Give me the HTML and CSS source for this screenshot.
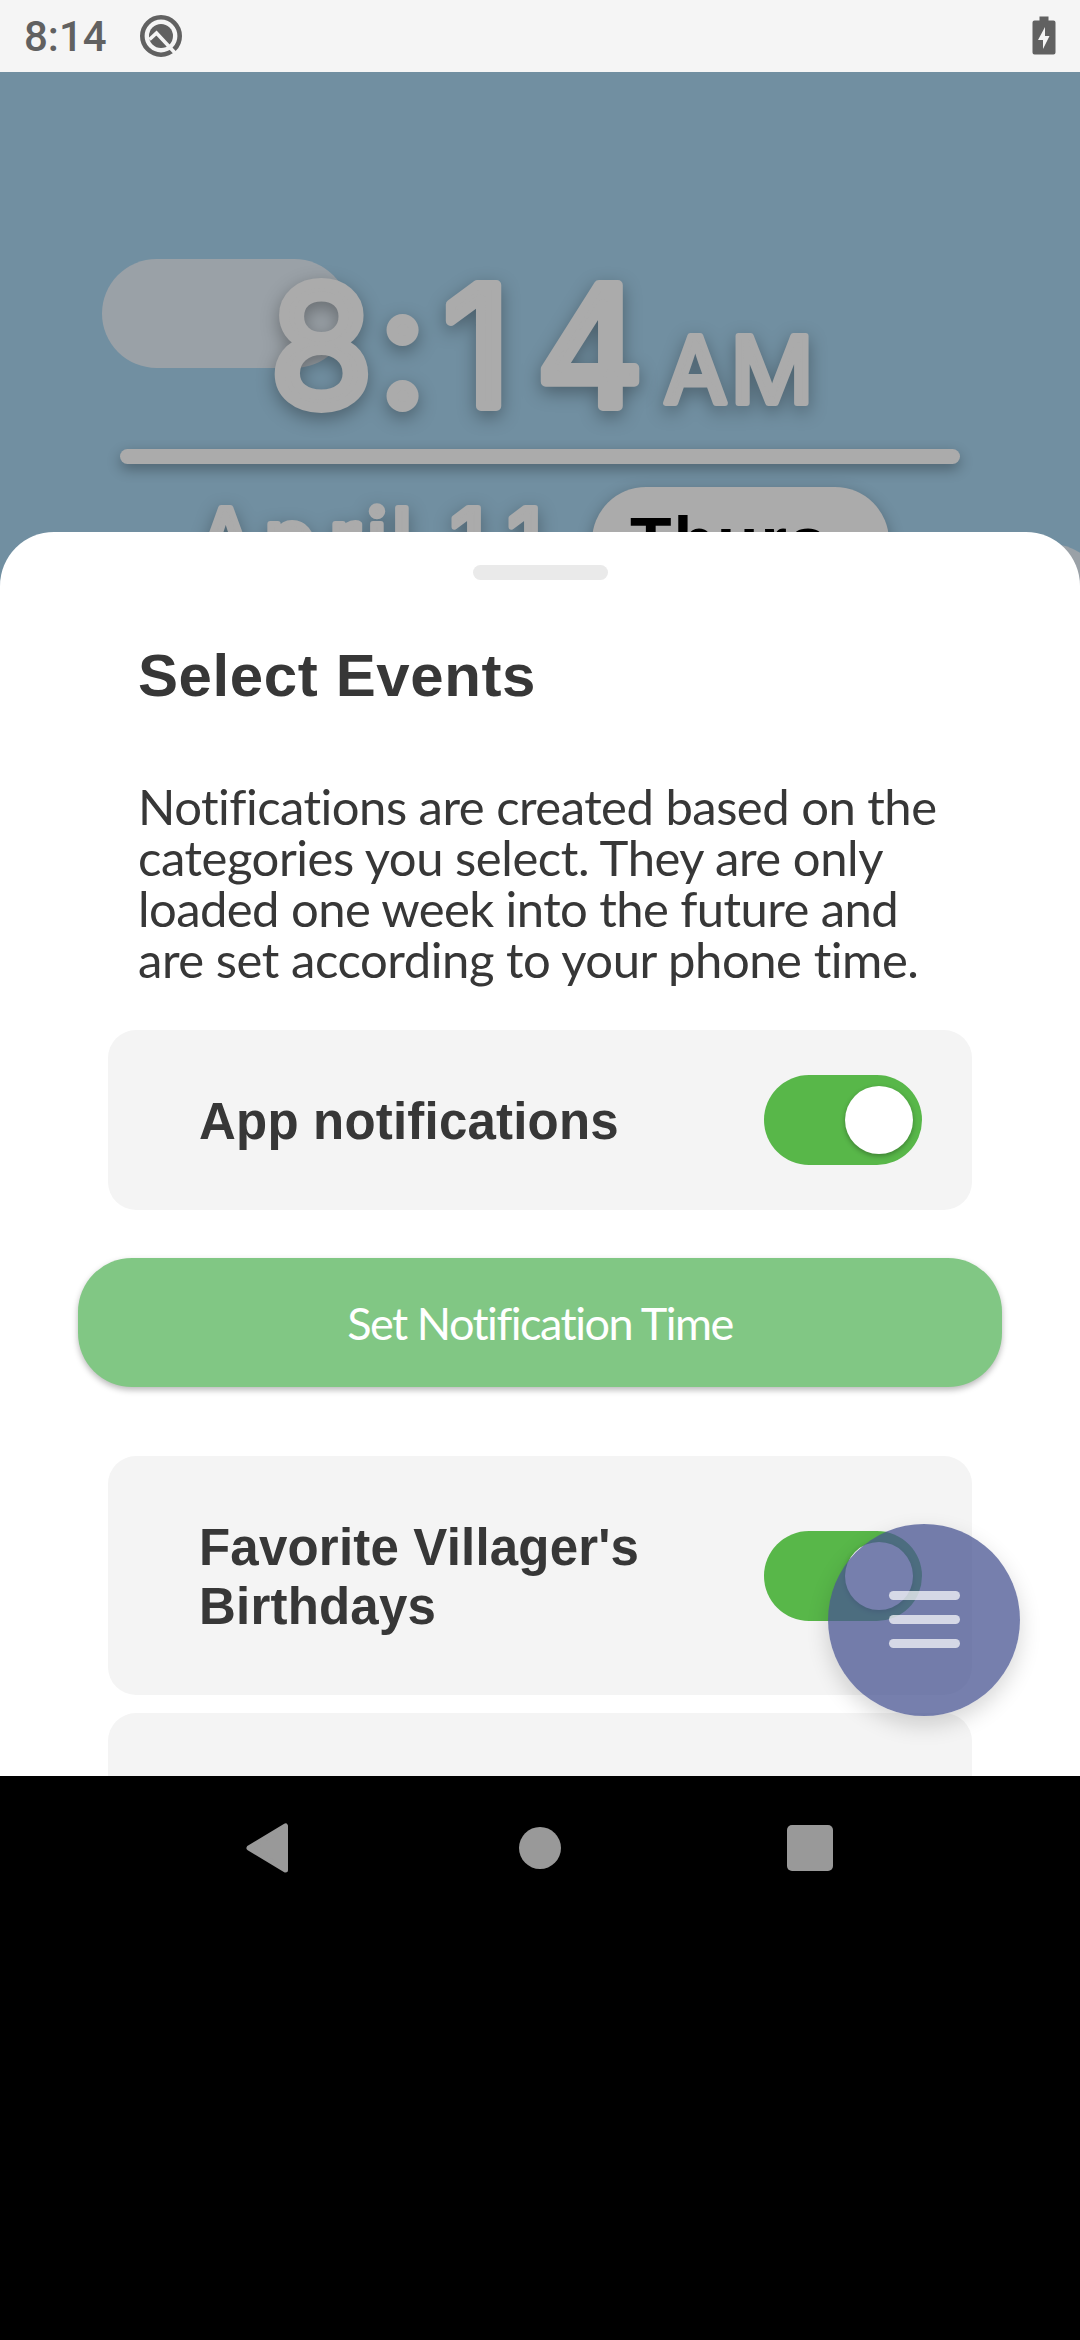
FILE: index.html
```html
<!DOCTYPE html>
<html lang="en">
<head>
<meta charset="utf-8">
<title>Select Events</title>
<link rel="stylesheet" href="styles.css">
</head>
<body>
<div class="status-bar">
  <span class="status-time">8:14</span>
  <svg class="status-q" width="44" height="44" viewBox="0 0 44 44">
    <circle cx="22" cy="22" r="18.700" fill="none" stroke="#616161" stroke-width="4.600"/>
    <circle cx="22" cy="22" r="12" fill="#616161"/>
    <path d="M10.500 25.500L17.500 19L37 40" fill="none" stroke="#f5f5f5" stroke-width="3.600"/>
  </svg>
  <svg class="status-battery" width="24" height="40" viewBox="0 0 24 40">
    <path d="M7.500 0.500h9v4h5a2 2 0 0 1 2 2v30a2 2 0 0 1-2 2h-19a2 2 0 0 1-2-2v-30a2 2 0 0 1 2-2h5z" fill="#616161"/>
    <path d="M13 11L6 24h5v9l6.500-13H13z" fill="#f5f5f5"/>
  </svg>
</div>

<main class="screen">
  <div class="cloud cloud-left"></div>
  <div class="cloud cloud-right"></div>
  <header class="clock">
    <svg class="clock-time" width="1080" height="200" viewBox="0 0 1080 200">
      <text class="digits" y="153.500" x="321.500 402.500 477 590">8:14</text>
      <text class="meridiem" y="151" x="695.500 772">AM</text>
    </svg>
    <div class="clock-rule"></div>
    <div class="date-row">
      <svg class="date" width="400" height="120" viewBox="0 0 400 120">
        <text class="date-text" y="84" x="46 110 165 197 222 250 288 345">April 11</text>
      </svg>
      <div class="weekday">Thurs.</div>
    </div>
  </header>

  <section class="sheet">
    <div class="handle"></div>
    <h1 class="title">Select Events</h1>
    <p class="intro">
      <span class="l1">Notifications are created based on the</span>
      <span class="l2">categories you select. They are only</span>
      <span class="l3">loaded one week into the future and</span>
      <span class="l4">are set according to your phone time.</span>
    </p>
    <div class="card">
      <span class="card-label">App notifications</span>
      <span class="toggle"><span class="thumb"></span></span>
    </div>
    <div class="button"><span>Set Notification Time</span></div>
    <div class="card card-tall">
      <span class="card-label">Favorite Villager's<br>Birthdays</span>
      <span class="toggle"><span class="thumb"></span></span>
    </div>
    <div class="card card-next"></div>
  </section>

  <div class="fab">
    <span class="bar"></span><span class="bar"></span><span class="bar"></span>
  </div>
</main>

<nav class="nav-bar">
  <svg class="nav-icon" width="60" height="60" viewBox="0 0 60 60"><path d="M9 30L45.500 8V52Z" fill="#999" stroke="#999" stroke-width="5" stroke-linejoin="round"/></svg>
  <svg class="nav-icon" width="60" height="60" viewBox="0 0 60 60"><circle cx="30" cy="30" r="21" fill="#999"/></svg>
  <svg class="nav-icon" width="60" height="60" viewBox="0 0 60 60"><rect x="7" y="7" width="46" height="46" rx="5" fill="#999"/></svg>
</nav>
</body>
</html>
```
FILE: styles.css
```css
* { box-sizing: border-box; }

body {
  margin: 0;
  width: 1080px;
  height: 2340px;
  overflow: hidden;
  background: #000;
  font-family: "Liberation Sans", Arial, sans-serif;
  color: #373737;
}

.status-bar {
  display: flex;
  align-items: center;
  height: 72px;
  padding: 0 24px;
  background: #f5f5f5;
}
.status-time {
  width: 115px;
  font: 500 42px/72px Roboto, sans-serif;
  padding-top: 2px;
  color: #616161;
}
.status-battery { margin-left: auto; }

.screen {
  position: relative;
  height: 1704px;
  overflow: hidden;
  background: #718fa1;
}

.cloud {
  position: absolute;
  height: 109px;
  width: 247px;
  border-radius: 55px;
  background: #9aa1a7;
}
.cloud-left { left: 102px; top: 187px; }
.cloud-right { left: 858px; top: 472px; }

.clock {
  position: relative;
  height: 460px;
  padding-top: 180px;
}
.clock-time {
  display: block;
  margin-bottom: -3px;
}
.clock text {
  font-family: Inter, "Liberation Sans", sans-serif;
  text-anchor: middle;
  fill: #ababab;
  stroke: #ababab;
  stroke-linejoin: round;
  filter: drop-shadow(0 6px 9px rgba(0, 0, 0, 0.32));
}
.clock .digits { font-size: 167px; font-weight: 400; stroke-width: 10px; }
.clock .meridiem { font-size: 92px; font-weight: 400; stroke-width: 6px; }
.clock .date-text { font-size: 86px; font-weight: 400; stroke-width: 6px; }

.clock-rule {
  width: 840px;
  height: 15px;
  margin: 0 auto;
  border-radius: 8px;
  background: #ababab;
  box-shadow: 0 5px 14px rgba(0, 0, 0, 0.32);
}
.date-row {
  display: flex;
  align-items: flex-start;
  padding: 23px 0 0 180px;
}
.date { margin-right: 12px; flex: none; }
.weekday {
  width: 297px;
  height: 109px;
  padding-left: 38px;
  border-radius: 54px;
  background: #ababab;
  box-shadow: 0 5px 16px rgba(0, 0, 0, 0.3);
  color: #000;
  font: bold 68px/109px "Liberation Sans", sans-serif;
  letter-spacing: 2px;
}

.sheet {
  position: relative;
  display: flex;
  flex-direction: column;
  align-items: center;
  height: 1244px;
  padding-top: 33px;
  border-radius: 54px 54px 0 0;
  background: #fff;
}
.handle {
  width: 135px;
  height: 15px;
  border-radius: 8px;
  background: #eaeaea;
}
.title {
  width: 804px;
  height: 70px;
  margin: 61px 0 0;
  font-size: 60px;
  line-height: 70px;
  letter-spacing: 0.6px;
}
.intro {
  width: 804px;
  margin: 70px 0 0;
  font: 49px/51px Lato, sans-serif;
}
.intro span { display: block; white-space: nowrap; width: max-content; }
.l1 { letter-spacing: -0.52px; }
.l2 { letter-spacing: -0.45px; }
.l3 { letter-spacing: -0.58px; }
.l4 { letter-spacing: -0.45px; }

.card {
  flex: none;
  display: flex;
  align-items: center;
  justify-content: space-between;
  width: 864px;
  height: 180px;
  margin-top: 45px;
  padding: 0 50px 0 91px;
  border-radius: 28px;
  background: #f4f4f4;
}
.card-label {
  font-size: 51px;
  font-weight: bold;
  line-height: 59px;
  letter-spacing: 0.2px;
  padding-top: 2px;
}
.toggle {
  display: flex;
  align-items: center;
  justify-content: flex-end;
  width: 158px;
  height: 90px;
  padding-right: 9px;
  border-radius: 45px;
  background: #58b749;
}
.thumb {
  width: 68px;
  height: 68px;
  border-radius: 50%;
  background: #fff;
  box-shadow: 0 2px 5px rgba(0, 0, 0, 0.3);
}
.button {
  flex: none;
  width: 924px;
  height: 129px;
  margin-top: 48px;
  border-radius: 54px;
  background: #81c784;
  box-shadow: 0 3px 6px rgba(0, 0, 0, 0.28);
  color: #fff;
  text-align: center;
  font: 45px/131px Lato, sans-serif;
  letter-spacing: -1.5px;
}
.card-tall { height: 239px; margin-top: 69px; }
.card-next { margin-top: 18px; border-radius: 28px 28px 0 0; height: 63px; }

.fab {
  position: absolute;
  left: 828px;
  top: 1452px;
  display: flex;
  flex-direction: column;
  align-items: center;
  justify-content: center;
  gap: 15px;
  width: 192px;
  height: 192px;
  padding-bottom: 1px;
  border-radius: 50%;
  background: rgba(72, 84, 145, 0.75);
  box-shadow: 0 9px 22px rgba(0, 0, 0, 0.16);
}
.bar {
  width: 71px;
  height: 9px;
  border-radius: 5px;
  background: rgba(255, 255, 255, 0.7);
}

.nav-bar {
  display: flex;
  justify-content: center;
  gap: 210px;
  padding-top: 42px;
}
```
